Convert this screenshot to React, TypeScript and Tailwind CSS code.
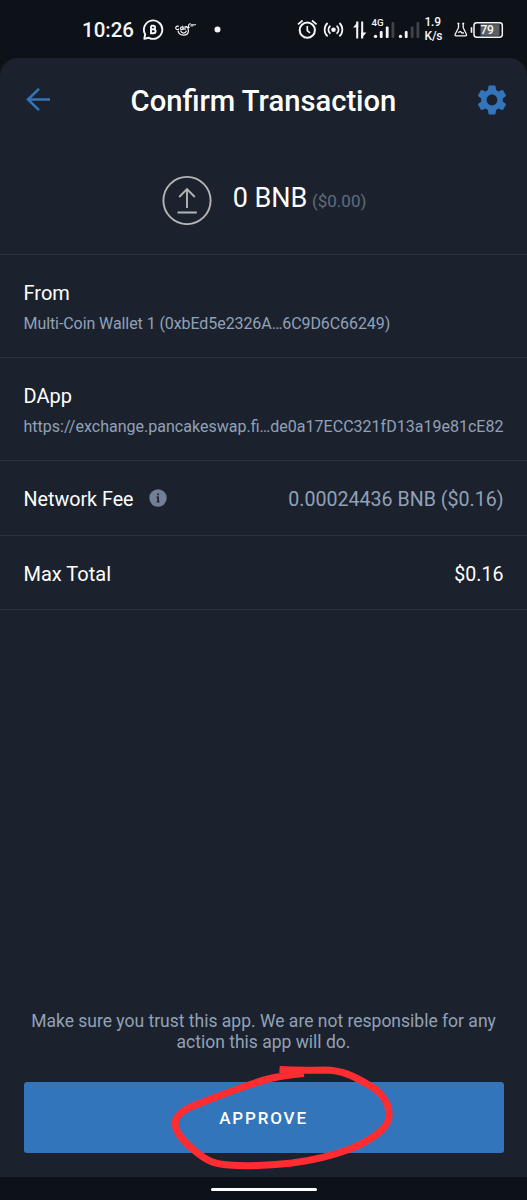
import type { ReactNode } from "react";

function StatusBar() {
  return (
    <div className="flex h-[58px] shrink-0 items-start text-[#f4f6f8]">
      <span className="ml-[82px] mt-[17px] w-[61px] whitespace-nowrap text-[20.500px] leading-[26px] font-medium">10:26</span>
      <svg className="mt-[18px] h-[24px] w-[80px]" viewBox="143 18 80 24" fill="none" stroke="currentColor">
        <path d="M144.3 38.8l.9-4.5a9.200 9.200 0 1 1 3.700 3.500z" strokeWidth="1.900" strokeLinejoin="round" />
        <path d="M151 25.700v7.500h2.600a2 2 0 0 0 0-4H151M151 25.700h2.300a1.750 1.750 0 0 1 0 3.500" strokeWidth="1.900" />
        <path d="M178.800 26.400c-2.600-.8-4 1.200-2.500 2.700 1 .8 2 .3 2.800-.3M183 27.200c-2.600-1-3.300 2.300-1.400 2.500 1.300 0 1.700-2.500 1.500-2.700l.3 2.800M185 30v-3.200l2-.3M188.200 30.500c-.4-4 .2-6.800 2.400-7M186.300 27.400h3.400M178 30.500c.8 6 10.200 6.500 10.500 0M180.500 30.800c1.800 3.200 4.800 3 6 0" strokeWidth="1.200" />
        <path d="M190.500 25.900h2.800M190.500 24.800h5.500" strokeWidth="1" />
        <circle cx="217.500" cy="29.500" r="3" fill="currentColor" stroke="none" />
      </svg>
      <svg className="ml-[73px] mt-[15px] h-[28px] w-[126px]" viewBox="296 15 126 28" fill="none" stroke="currentColor">
        <circle cx="307.300" cy="30.200" r="7.600" strokeWidth="2" />
        <path d="M307.300 26v4.600l2.700 2.200M298 24.400l4.600-3.900M312 20.500l4.600 3.900" strokeWidth="1.700" />
        <circle cx="333.500" cy="29.700" r="2.300" fill="currentColor" stroke="none" />
        <path d="M330.400 25.700a5 5 0 0 0 0 8M336.600 25.700a5 5 0 0 1 0 8M327.600 23a9 9 0 0 0 0 13.400M339.400 23a9 9 0 0 1 0 13.400" strokeWidth="1.700" />
        <path d="M357.200 21.500v17M362.200 21.500v17" strokeWidth="2" />
        <path d="M358.200 21.500l-5.200 6h5.200zM361.200 38.500l5.200-6h-5.200z" fill="currentColor" stroke="none" />
        <text x="371.500" y="26" fill="currentColor" stroke="none" fontSize="9.700" fontWeight="500">4G</text>
        <g stroke="none" fill="currentColor">
          <circle cx="375.500" cy="36.400" r="1.700" />
          <rect x="379.800" y="31" width="2.800" height="7" rx="1" />
          <rect x="385.800" y="26.500" width="2.800" height="11.500" rx="1" />
          <rect x="391.500" y="22" width="2.800" height="16" rx="1" fill="#3f444a" />
          <circle cx="400.500" cy="36.400" r="1.700" />
          <rect x="404.800" y="31" width="2.800" height="7" rx="1" />
          <rect x="410.800" y="26.500" width="2.800" height="11.500" rx="1" fill="#3f444a" />
          <rect x="416.500" y="22" width="2.800" height="16" rx="1" fill="#3f444a" />
        </g>
      </svg>
      <div className="ml-[2.500px] mt-[16px] w-[29.500px] text-[12px] leading-[13.500px] font-medium tracking-[-0.200px]">
        <div>1.9</div>
        <div>K/s</div>
      </div>
      <svg className="mt-[18px] h-[24px] w-[52px]" viewBox="454 18 52 24" fill="none" stroke="currentColor">
        <path d="M458.500 23.500v4.200l-3.300 6.600c-.5 1 0 1.500.8 1.500h9.500c.9 0 1.300-.6.900-1.500l-3.200-6.600v-4.200M457.400 23.500h2M462.200 23.500h2M458 32.500l2.500-1 1.500 1.500 2-.2" strokeWidth="1.300" />
        <path d="M471.500 27.200v5.600" strokeWidth="1.600" />
        <rect x="480.500" y="24.200" width="19" height="11.600" fill="#5c6065" stroke="none" />
        <rect x="474" y="22.700" width="28.300" height="14.500" rx="2.700" strokeWidth="1.500" />
        <text x="487" y="34.200" textAnchor="middle" fill="currentColor" stroke="none" fontSize="12" fontWeight="500" letterSpacing="-0.400">79</text>
      </svg>
    </div>
  );
}

function Row({ className, children }: { className: string; children: ReactNode }) {
  return <section className={`shrink-0 border-b border-[#2b3340] px-[23.500px] ${className}`}>{children}</section>;
}

export default function App() {
  return (
    <div className="relative flex h-[1200px] w-[527px] flex-col overflow-hidden bg-[#0d1118] font-['Roboto',sans-serif] text-white">
      <StatusBar />
      <main className="flex h-[1119px] flex-col rounded-t-[18px] bg-[#1b222d]">
        <header className="flex h-[84px] shrink-0 items-center justify-between pl-[26px] pr-[17px]">
          <svg className="h-[24px] w-[26px]" viewBox="0 0 26 24" fill="none" stroke="#3375bb" strokeWidth="2.500">
            <path d="M24 11.500H2M13 .8L2 11.500l11 10.700" />
          </svg>
          <h1 className="mt-[1px] ml-[1px] whitespace-nowrap text-[29.200px] leading-[34px] font-medium">Confirm Transaction</h1>
          <svg className="mb-px h-[36px] w-[36px]" viewBox="0 0 24 24" fill="#3375bb">
            <path d="M19.140 12.940c.04-.3.060-.61.060-.94 0-.32-.02-.64-.07-.94l2.030-1.580a.49.49 0 0 0 .12-.61l-1.920-3.320a.488.488 0 0 0-.59-.22l-2.390.96c-.5-.38-1.030-.7-1.620-.94l-.36-2.540a.484.484 0 0 0-.48-.41h-3.840c-.24 0-.43.17-.47.41l-.36 2.540c-.59.24-1.130.57-1.620.94l-2.390-.96c-.22-.08-.47 0-.59.22L2.740 8.870c-.12.21-.08.47.12.61l2.030 1.580c-.05.3-.09.63-.09.94s.02.64.07.94l-2.030 1.580a.49.49 0 0 0-.12.61l1.920 3.320c.12.22.37.29.59.22l2.390-.96c.5.38 1.030.7 1.620.94l.36 2.540c.05.24.24.41.48.41h3.840c.24 0 .44-.17.47-.41l.36-2.540c.59-.24 1.130-.56 1.620-.94l2.390.96c.22.08.47 0 .59-.22l1.920-3.320c.12-.22.070-.47-.12-.61l-2.010-1.580zM12 15.600c-1.980 0-3.600-1.620-3.600-3.600s1.620-3.600 3.600-3.600 3.600 1.620 3.600 3.600-1.620 3.600-3.600 3.600z" />
          </svg>
        </header>

        <Row className="flex h-[113px] items-start justify-center">
          <svg className="ml-[1px] mt-[33px] h-[50px] w-[50px]" viewBox="0 0 50 50" fill="none" stroke="#b4b4b5" strokeWidth="1.900">
            <circle cx="25" cy="25.500" r="23.600" />
            <path d="M25 33V14.500M17.200 22L25 14.200l7.800 7.800M15.500 37.500h19.300" />
          </svg>
          <div className="ml-[21px] mt-[39px] flex items-baseline whitespace-nowrap">
            <span className="text-[27px] leading-[34px]">0 BNB</span>
            <span className="ml-[4.500px] text-[17px] text-[#616c7c]">($0.00)</span>
          </div>
        </Row>

        <Row className="h-[102.500px] pt-[25px]">
          <h2 className="text-[20px] leading-[26px]">From</h2>
          <p className="mt-[7px] whitespace-nowrap text-[16px] leading-[22px] tracking-[-0.080px] text-[#92a1b7]">Multi-Coin Wallet 1 (0xbEd5e2326A…6C9D6C66249)</p>
        </Row>
        <Row className="h-[103px] pt-[25px]">
          <h2 className="text-[20px] leading-[26px]">DApp</h2>
          <p className="mt-[7px] whitespace-nowrap text-[16.040px] leading-[22px] text-[#92a1b7]">https://exchange.pancakeswap.fi…de0a17ECC321fD13a19e81cE82</p>
        </Row>
        <Row className="flex h-[75px] items-center text-[19.700px]">
          <span className="mt-[5px]">Network Fee</span>
          <svg className="ml-[15.500px] h-[18px] w-[18px]" viewBox="0 0 18 18">
            <circle cx="9" cy="9" r="8.700" fill="#718096" />
            <path d="M8.200 4.500h1.800v1.700H8.200zM7.400 7.600H10v4.800h.7v1.100H7.500v-1.100h.7V8.800h-.8z" fill="#1b222d" />
          </svg>
          <span className="ml-auto mt-[5px] text-[19.600px] text-[#92a1b7]">0.00024436 BNB ($0.16)</span>
        </Row>
        <Row className="flex h-[74px] items-center justify-between text-[20px]">
          <span className="mt-[3px]">Max Total</span>
          <span className="mt-[5px] text-[19.600px]">$0.16</span>
        </Row>

        <footer className="mt-auto flex flex-col px-[23.500px] pb-[24px]">
          <p className="mb-[30px] whitespace-nowrap text-center text-[17.500px] leading-[20.500px] text-[#92a1b7]">
            Make sure you trust this app. We are not responsible for any
            <br />
            action this app will do.
          </p>
          <button className="h-[71px] rounded-[3px] bg-[#3375bb] pt-[3px] text-[17px] font-medium tracking-[1.850px]">APPROVE</button>
        </footer>
      </main>
      <div className="flex flex-1 items-center justify-center">
        <div className="mt-[2px] h-[3px] w-[106px] rounded-full bg-white" />
      </div>

      <svg className="pointer-events-none absolute left-[160px] top-[1055px] h-[120px] w-[240px]" viewBox="160 1055 240 120" fill="none" stroke="#ff2d31" strokeWidth="7" strokeLinejoin="round" strokeLinecap="butt">
        <path d="M304 1073.500C292 1074.500 278 1076.500 268 1079C244 1085.500 219 1096 198 1104C184 1109 175 1116 175 1124C176 1133 185 1143 195 1151C207 1161 215 1164.500 229 1165C248 1167 272 1165 292 1163C316 1160 334 1155 350 1149C372 1140 388 1128 389 1117C390 1103 381 1092 369 1085C355 1077 343 1070 324 1070C308 1070.500 294 1070.500 279.500 1069.500" />
      </svg>
    </div>
  );
}
